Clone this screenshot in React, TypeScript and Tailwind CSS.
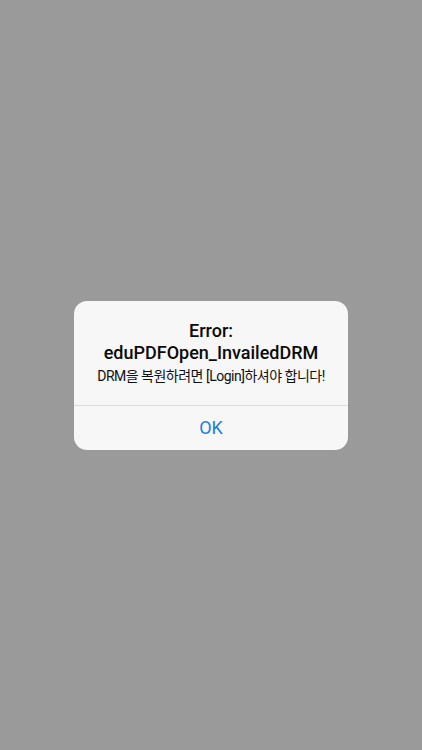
import React from 'react';

const App: React.FC = () => {
  return (
    <div
      className="flex h-[750px] w-full items-center justify-center bg-[#9a9a9a]"
      style={{ fontFamily: 'Roboto, "Noto Sans CJK KR", sans-serif' }}
    >
      {/* Alert */}
      <div className="mt-[1px] w-[274px] overflow-hidden rounded-[13px] bg-[#f7f7f7]">
        <div className="flex flex-col items-center px-2 pt-[19px] pb-[19px] text-center">
          <h1 className="text-[18px] leading-[22px] font-medium text-[#0a0a0a]">
            Error:
            <br />
            eduPDFOpen_InvailedDRM
          </h1>
          <p className="mt-[2px] whitespace-nowrap text-[14px] leading-[20px] tracking-[-0.5px] text-[#111]">
            DRM을 복원하려면 [Login]하셔야 합니다!
          </p>
        </div>
        <div className="h-px bg-[#dcdcdc]" />
        <button className="flex h-[44px] w-full items-center justify-center pb-[1px] text-[18px] text-[#1b7fe3]">
          OK
        </button>
      </div>
    </div>
  );
};

export default App;
